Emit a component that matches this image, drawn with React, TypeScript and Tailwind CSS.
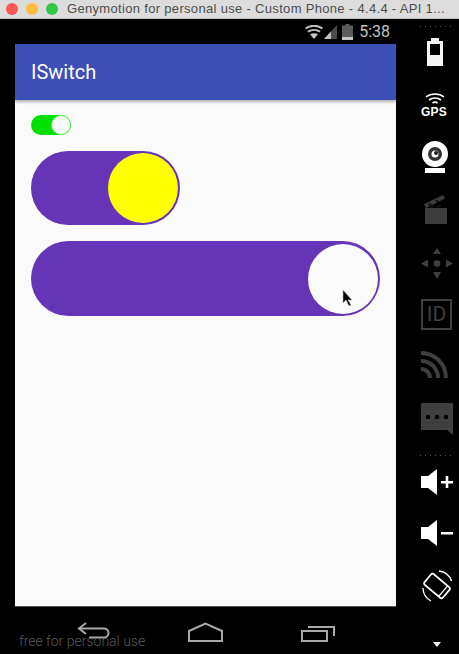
export default function App() {
  return (
    <div className="relative w-[459px] h-[654px] bg-black overflow-hidden flex flex-col font-['Roboto',sans-serif]">
      {/* mac window title */}
      <div className="h-[19px] shrink-0 flex items-center bg-[#dcdcdc] border-b border-[#c4c4c4] pl-[6px]">
        <span className="w-[12px] h-[12px] rounded-full bg-[#fc5753]" />
        <span className="w-[12px] h-[12px] rounded-full bg-[#fdbc40] ml-[8px]" />
        <span className="w-[12px] h-[12px] rounded-full bg-[#33c748] ml-[8px]" />
        <span className="ml-[9px] text-[13px] leading-[18px] whitespace-nowrap text-[#4d4d4d] font-['Liberation_Sans',sans-serif] tracking-[0.32px]">
          Genymotion for personal use - Custom Phone - 4.4.4 - API 1...
        </span>
      </div>

      <div className="flex flex-1">
        {/* phone */}
        <div className="w-[396px] flex flex-col">
          <StatusBar />
          <div className="ml-[15px] w-[381px] h-[563px] bg-[#fafafa] border-b border-[#555] flex flex-col">
            <div className="h-[56px] bg-[#3d4eb6] flex items-center pl-[16px] text-white text-[20px] shadow-[0_2px_3px_rgba(0,0,0,0.3)]">
              ISwitch
            </div>
            <div className="flex flex-col items-start pl-[16px] pt-[15px]">
              <div className="w-[40px] h-[20px] rounded-full bg-[#00e000] flex justify-end items-center">
                <div className="w-[20px] h-[20px] rounded-full bg-[#fafafa] border border-[#66ec66]" />
              </div>
              <div className="mt-[16px] w-[149px] h-[74px] rounded-full bg-[#6634b6] flex justify-end items-center pr-[2px]">
                <div className="w-[70px] h-[70px] rounded-full bg-[#ffff00]" />
              </div>
              <div className="mt-[16px] w-[349px] h-[75px] rounded-full bg-[#6634b6] flex justify-end items-center pr-[2px]">
                <div className="w-[70px] h-[70px] rounded-full bg-[#fafafa]" />
              </div>
            </div>
          </div>
          <NavBar />
        </div>
        <SideBar />
      </div>

      {/* watermark */}
      <span className="absolute left-[19px] top-[631px] text-[14px] leading-[20px] font-light text-[#5a5a5a] whitespace-nowrap">
        free for personal use
      </span>

      {/* mouse pointer */}
      <svg className="absolute left-[341px] top-[289px]" width="14" height="20" viewBox="0 0 14 20">
        <path d="M2 1v13l3-3 3 6 2-1-3-5h4z" fill="#000" stroke="#bdbdbd" strokeWidth="0.6" />
      </svg>
    </div>
  );
}

function StatusBar() {
  return (
    <div className="h-[25px] flex items-center justify-end pr-[6px]">
      <svg width="18" height="14" viewBox="0 0 18 14" fill="none" stroke="#c4c4c4" strokeWidth="2">
        <path d="M0.500 3.500c5-3.600 12-3.600 17 0" />
        <path d="M3 6.800c3.500-2.400 8.500-2.400 12 0" />
        <path d="M9 14 5 9.300c2.400-1.300 5.600-1.300 8 0z" fill="#c4c4c4" stroke="none" />
      </svg>
      <svg className="ml-[1px]" width="13" height="14" viewBox="0 0 13 14">
        <path d="M0 14 13 0v14z" fill="#4a4a4a" />
        <path d="M0 14 7 6.500V14z" fill="#c4c4c4" />
      </svg>
      <svg className="ml-[5px]" width="11" height="16" viewBox="0 0 11 16">
        <path d="M3.500 0h4v1.500H11V16H0V1.500h3.500z" fill="#5c5c5c" />
        <path d="M0 13h11v3H0z" fill="#c4c4c4" />
      </svg>
      <span className="ml-[6px] text-[16px] leading-[20px] text-[#c4c4c4]">5:38</span>
    </div>
  );
}

function NavBar() {
  return (
    <div className="flex-1 flex items-start pl-[77px] pt-[15px]">
      <svg width="34" height="18" viewBox="0 0 34 18" fill="none" stroke="#a8a8a8" strokeWidth="2">
        <path d="M9 1 2 6.500 9 12" />
        <path d="M2 6.500h25c6 0 6 9 0 9H12" />
      </svg>
      <svg className="ml-[76px]" width="37" height="20" viewBox="0 0 37 20" fill="none" stroke="#a8a8a8" strokeWidth="2">
        <path d="M2 19V9L18.500 1.500 35 9v10z" />
      </svg>
      <svg className="ml-[77px] mt-[2px]" width="35" height="18" viewBox="0 0 35 18" fill="none" stroke="#a8a8a8" strokeWidth="2">
        <path d="M1 7h25v10H1z" />
        <path d="M7 3h26v9" />
      </svg>
    </div>
  );
}

function DotRow({ className }: { className: string }) {
  return (
    <div className={`flex gap-[4px] ml-[24px] ${className}`}>
      {[0, 1, 2, 3, 4, 5, 6].map((i) => (
        <span key={i} className="w-[1px] h-[1px] bg-[#555]" />
      ))}
    </div>
  );
}

function SideBar() {
  return (
    <div className="w-[63px] flex flex-col items-start">
      <DotRow className="mt-[7px]" />

      {/* battery */}
      <svg className="ml-[31px] mt-[11px]" width="16" height="28" viewBox="0 0 16 28">
        <path fillRule="evenodd" d="M4 0h8v3h4v25H0V3h4zM3 6v11h10V6z" fill="#f5f5f5" />
      </svg>

      {/* gps */}
      <svg className="ml-[29px] mt-[27px]" width="20" height="11" viewBox="0 0 20 11" fill="none" stroke="#fff" strokeWidth="1.600">
        <path d="M1 4c5-4 13-4 18 0" />
        <path d="M4 7c3.500-2.600 8.500-2.600 12 0" />
        <path d="M7.500 10c1.500-1 3.500-1 5 0" />
      </svg>
      <span className="ml-[25px] mt-[2px] text-[12px] leading-[12px] font-bold text-white font-['Liberation_Sans',sans-serif] tracking-[0.2px]">
        GPS
      </span>

      {/* webcam */}
      <svg className="ml-[26px] mt-[23px]" width="26" height="32" viewBox="0 0 26 32">
        <circle cx="13" cy="13" r="13" fill="#fff" />
        <circle cx="13" cy="13" r="7" fill="#333" />
        <circle cx="13" cy="13" r="3.500" fill="#fff" />
        <circle cx="14" cy="12" r="2" fill="#222" />
        <path d="M3 27h20v5H3z" fill="#fff" />
      </svg>

      {/* clapper board */}
      <svg className="ml-[28px] mt-[22px]" width="23" height="29" viewBox="0 0 23 29">
        <path d="M1 13h22v16H1z" fill="#3c3c3c" />
        <path d="M0 9 19 0l2 3.500L2 13z" fill="#3c3c3c" />
        <path d="M5 13l3-3h3l-3 3zM12 13l3-3h3l-3 3zM6 8l2 2.500-2 1-2-2.500zM13 4.500 15 7l-2 1-2-2.500z" fill="#111" />
      </svg>

      {/* d-pad */}
      <svg className="ml-[25px] mt-[24px]" width="32" height="31" viewBox="0 0 32 31" fill="#3f3f3f">
        <path d="M16 0l4 6h-8zM16 31l-4-7h8zM0 15.500l7-4v8zM32 15.500l-7 4v-8z" />
        <circle cx="16" cy="15.500" r="3.300" />
      </svg>

      {/* id */}
      <div className="ml-[25px] mt-[20px] w-[31px] h-[31px] border-2 border-[#3f3f3f] flex items-center justify-center text-[#3f3f3f] text-[21px] leading-[21px]">
        ID
      </div>

      {/* rss */}
      <svg className="ml-[25px] mt-[21px]" width="27" height="27" viewBox="0 0 27 27" fill="none" stroke="#3f3f3f" strokeWidth="4">
        <path d="M0 2c14 0 25 11 25 25" />
        <path d="M0 10c9.500 0 17 7.500 17 17" />
        <path d="M0 18c5 0 9 4 9 9" />
      </svg>

      {/* sms */}
      <svg className="ml-[25px] mt-[25px]" width="32" height="32" viewBox="0 0 32 32">
        <path d="M0 0h32v32l-6-5H0z" fill="#3f3f3f" />
        <circle cx="7" cy="14" r="2.200" fill="#000" />
        <circle cx="16" cy="14" r="2.200" fill="#000" />
        <circle cx="25" cy="14" r="2.200" fill="#000" />
      </svg>

      <DotRow className="mt-[20px]" />

      {/* volume up */}
      <svg className="ml-[25px] mt-[13px]" width="32" height="26" viewBox="0 0 32 26" fill="#fff">
        <path d="M0 7h7l9-7v26l-9-7H0z" />
        <path d="M20 12h12v2.500H20z" />
        <path d="M24.700 7h2.600v12h-2.600z" />
      </svg>

      {/* volume down */}
      <svg className="ml-[25px] mt-[25px]" width="32" height="26" viewBox="0 0 32 26" fill="#fff">
        <path d="M0 7h7l9-7v26l-9-7H0z" />
        <path d="M20 12h12v2.500H20z" />
      </svg>

      {/* rotate */}
      <svg className="ml-[26px] mt-[24px]" width="31" height="32" viewBox="0 0 31 32" fill="none" stroke="#fff">
        <g transform="rotate(-50 15 16)">
          <rect x="8" y="4" width="14" height="24" rx="2" strokeWidth="1.800" />
          <path d="M8 24h14" strokeWidth="1.200" />
        </g>
        <path d="M17 1a15 15 0 0 1 12.500 10" strokeWidth="1.300" />
        <path d="M9 31A15 15 0 0 1 1 18" strokeWidth="1.300" />
      </svg>

      {/* more */}
      <svg className="ml-[37px] mt-[40px]" width="8" height="5" viewBox="0 0 8 5">
        <path d="M0 0h8L4 5z" fill="#fff" />
      </svg>
    </div>
  );
}
